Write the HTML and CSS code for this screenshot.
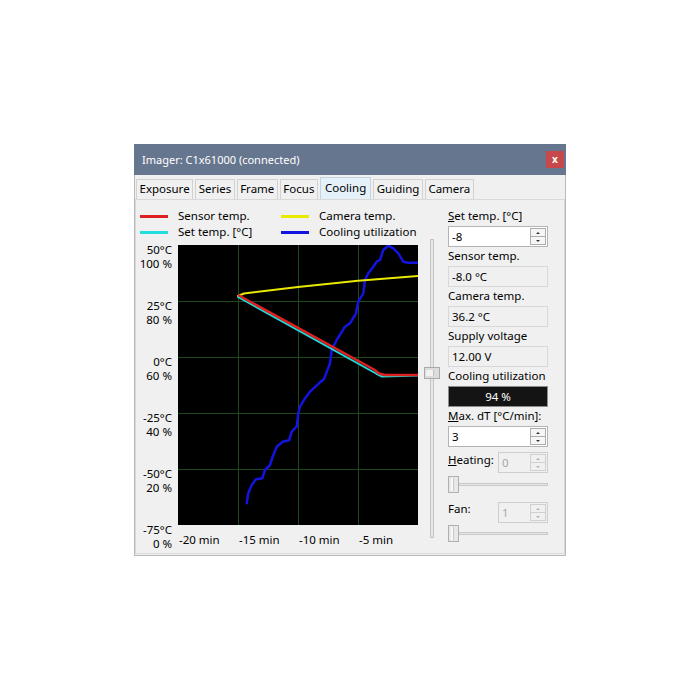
FILE: index.html
```html
<!DOCTYPE html>
<html>
<head>
<meta charset="utf-8">
<link rel="stylesheet" href="styles.css">
</head>
<body>
<div class="window">
  <div class="titlebar">
    <span class="title">Imager: C1x61000 (connected)</span>
    <span class="close">x</span>
  </div>
  <div class="client">
    <div class="tabs">
      <div class="tab">Exposure</div>
      <div class="tab">Series</div>
      <div class="tab">Frame</div>
      <div class="tab">Focus</div>
      <div class="tab active">Cooling</div>
      <div class="tab">Guiding</div>
      <div class="tab">Camera</div>
    </div>
    <div class="panel">
      <div class="chart-section">
        <div class="legend">
          <div class="legend-item"><span class="swatch red"></span>Sensor temp.</div>
          <div class="legend-item"><span class="swatch yellow"></span>Camera temp.</div>
          <div class="legend-item"><span class="swatch cyan"></span>Set temp. [°C]</div>
          <div class="legend-item"><span class="swatch blue"></span>Cooling utilization</div>
        </div>
        <div class="chart-row">
          <div class="y-axis">
            <div class="y-label">50°C<br>100 %</div>
            <div class="y-label">25°C<br>80 %</div>
            <div class="y-label">0°C<br>60 %</div>
            <div class="y-label">-25°C<br>40 %</div>
            <div class="y-label">-50°C<br>20 %</div>
            <div class="y-label">-75°C<br>0 %</div>
          </div>
          <div class="plot-col">
            <svg class="plot" width="240" height="280" viewBox="0 0 240 280">
              <rect width="240" height="280" fill="#000"/>
              <g stroke="#1c481c" stroke-width="1">
                <line x1="60.5" y1="0" x2="60.5" y2="280"/>
                <line x1="120.5" y1="0" x2="120.5" y2="280"/>
                <line x1="180.5" y1="0" x2="180.5" y2="280"/>
                <line x1="0" y1="56.5" x2="240" y2="56.5"/>
                <line x1="0" y1="112.5" x2="240" y2="112.5"/>
                <line x1="0" y1="168.5" x2="240" y2="168.5"/>
                <line x1="0" y1="224.5" x2="240" y2="224.5"/>
              </g>
              <g fill="none" stroke-linejoin="round" stroke-linecap="round">
                <polyline stroke="#1414e0" stroke-width="2.5" points="68.7,258.3 70.3,248.3 73.7,240 78,234.3 84.3,233.3 87,225 92,220 94.7,211.7 98.7,201.7 104.7,196.7 111,195.3 113.7,186.7 118.7,181.7 120.3,168.3 122,161.7 127,153.3 132,146.7 141,138.3 146,134 152,118.3 153.7,105 158.7,95 167,81.7 172,78.3 178,68.3 180.3,56.7 185.3,48.3 187,35 190.3,28.3 195.3,21.7 198.7,16.7 202,15 205.3,5 210.3,0.7 215.3,3.3 220.3,8.3 225.3,16.7 230.3,17.7 240,17.7"/>
                <polyline stroke="#e8e800" stroke-width="2" points="60,51 66,48.5 120,42 180,35.7 240,31"/>
                <polyline stroke="#22d8d8" stroke-width="2" points="60,52 198,128.5 204,131.5 240,130.5"/>
                <polyline stroke="#dd2020" stroke-width="2.5" points="61,50.5 196,124.5 201,128.5 207,130 240,130"/>
              </g>
            </svg>
            <div class="x-axis">
              <span>-20 min</span><span>-15 min</span><span>-10 min</span><span>-5 min</span>
            </div>
          </div>
        </div>
      </div>
      <div class="vslider">
        <div class="vtrack"><div class="vthumb"><span class="vgrip"></span></div></div>
      </div>
      <div class="controls">
        <div class="field">
          <div class="label"><u>S</u>et temp. [°C]</div>
          <div class="box edit"><span class="val">-8</span><span class="spin"><span class="up"></span><span class="down"></span></span></div>
        </div>
        <div class="field">
          <div class="label">Sensor temp.</div>
          <div class="box readonly"><span class="val">-8.0 °C</span></div>
        </div>
        <div class="field">
          <div class="label">Camera temp.</div>
          <div class="box readonly"><span class="val">36.2 °C</span></div>
        </div>
        <div class="field">
          <div class="label">Supply voltage</div>
          <div class="box readonly"><span class="val">12.00 V</span></div>
        </div>
        <div class="field">
          <div class="label">Cooling utilization</div>
          <div class="box meter">94 %</div>
        </div>
        <div class="field">
          <div class="label"><u>M</u>ax. dT [°C/min]:</div>
          <div class="box edit"><span class="val">3</span><span class="spin"><span class="up"></span><span class="down"></span></span></div>
        </div>
        <div class="inline-row heating">
          <div class="inline-label"><u>H</u>eating:</div>
          <div class="box small disabled"><span class="val">0</span><span class="spin"><span class="up"></span><span class="down"></span></span></div>
        </div>
        <div class="hslider first"><div class="htrack"></div><div class="hthumb"><span class="hgrip"></span></div></div>
        <div class="inline-row fan">
          <div class="inline-label">Fan:</div>
          <div class="box small disabled"><span class="val">1</span><span class="spin"><span class="up"></span><span class="down"></span></span></div>
        </div>
        <div class="hslider"><div class="htrack"></div><div class="hthumb"><span class="hgrip"></span></div></div>
      </div>
    </div>
  </div>
</div>
</body>
</html>
```
FILE: styles.css
```css
* { box-sizing: border-box; }
body {
  margin: 0;
  background: #fff;
  font-family: "Noto Sans", "Open Sans", sans-serif;
  font-size: 11.5px;
  color: #000;
}
.window {
  margin: 144px 0 0 134px;
  width: 432px;
}
.titlebar {
  height: 31px;
  background: #67768f;
  display: flex;
  align-items: center;
  justify-content: space-between;
  padding-left: 8px;
  padding-right: 2px;
}
.title {
  color: #fff;
  font-size: 11px;
}
.close {
  width: 18px;
  height: 17px;
  background: #c7474a;
  color: #fff;
  font-size: 10px;
  font-weight: bold;
  display: flex;
  align-items: center;
  justify-content: center;
  line-height: 1;
  padding-bottom: 1px;
}
.client {
  background: #f0f0f0;
  border: 1px solid #b8b8b8;
  border-top: none;
  padding: 2px 0 1px 0;
}
.tabs {
  display: flex;
  align-items: flex-end;
  height: 22px;
  gap: 2px;
  padding-left: 1px;
}
.tab {
  height: 20px;
  padding: 0 2.5px;
  border: 1px solid #d2d2d2;
  border-bottom: none;
  background: #f0f0f0;
  line-height: 18px;
}
.tab.active {
  height: 22px;
  background: #e4f1f9;
  border-color: #c4d4de;
  line-height: 19px;
  padding: 0 4px;
}
.panel {
  display: flex;
  height: 355px;
  border: 1px solid #d9d9d9;
  background: #f0f0f0;
}
.chart-section {
  width: 284px;
  padding: 8px 0 0 3px;
}
.legend {
  display: grid;
  grid-template-columns: 141px auto;
  grid-auto-rows: 16px;
  margin-left: 1px;
}
.legend-item {
  display: flex;
  align-items: center;
  line-height: 16px;
  white-space: nowrap;
}
.swatch {
  width: 28px;
  height: 3px;
  margin-right: 10px;
  flex: none;
}
.swatch.red { background: #e02020; }
.swatch.yellow { background: #eaea00; }
.swatch.cyan { background: #22dede; }
.swatch.blue { background: #1414e0; }
.chart-row {
  display: flex;
  gap: 6px;
  margin-top: 3px;
}
.y-axis {
  width: 33px;
  display: grid;
  grid-auto-rows: 56px;
  text-align: right;
  line-height: 14px;
  white-space: nowrap;
}
.plot-col {
  margin-top: 2px;
}
.plot {
  display: block;
}
.x-axis {
  display: flex;
  margin-top: 7px;
  line-height: 16px;
}
.x-axis span {
  width: 60px;
  padding-left: 1px;
}
.vslider {
  width: 24px;
  padding-top: 39px;
}
.vtrack {
  position: relative;
  margin: 0 auto;
  width: 4px;
  height: 299px;
  background: #e6e6e6;
  border: 1px solid #c6c6c6;
}
.vthumb {
  position: absolute;
  left: -7px;
  top: 127px;
  width: 16px;
  height: 12px;
  background: #dcdcdc;
  border: 1px solid #a9a9a9;
}
.vgrip {
  position: absolute;
  left: 1px;
  top: 2px;
  width: 8px;
  height: 6px;
  background: #f2f2f2;
  border-right: 1px solid #c0c0c0;
}
.controls {
  width: 100px;
  margin-left: 4px;
  padding-top: 8px;
}
.field .label {
  line-height: 16px;
  height: 18px;
  white-space: nowrap;
}
.box {
  height: 21px;
  margin-bottom: 1px;
  display: flex;
  align-items: center;
  line-height: 19px;
}
.val {
  flex: 1;
  padding-left: 3px;
}
.box.edit {
  background: #fff;
  border: 1px solid #b4b4b4;
}
.box.readonly {
  background: #f0f0f0;
  border: 1px solid #d8d8d8;
}
.box.meter {
  background: #141414;
  border: 1px solid #8c8c8c;
  color: #fff;
  justify-content: center;
}
.spin {
  width: 16px;
  height: 17px;
  margin-right: 1px;
  display: flex;
  flex-direction: column;
}
.spin .up, .spin .down {
  flex: 1;
  border: 1px solid #adadad;
  background: #f6f6f6;
  display: flex;
  align-items: center;
  justify-content: center;
}
.spin .down { border-top: none; }
.spin .up::after {
  content: "";
  border-left: 2px solid transparent;
  border-right: 2px solid transparent;
  border-bottom: 2px solid #333;
}
.spin .down::after {
  content: "";
  border-left: 2px solid transparent;
  border-right: 2px solid transparent;
  border-top: 2px solid #333;
}
.box.small {
  width: 50px;
}
.box.disabled {
  background: #f0f0f0;
  border: 1px solid #cfcfcf;
  color: #a8a8a8;
}
.box.disabled .spin .up, .box.disabled .spin .down {
  border-color: #d0d0d0;
  background: #f0f0f0;
}
.box.disabled .spin .up::after { border-bottom-color: #b0b0b0; }
.box.disabled .spin .down::after { border-top-color: #b0b0b0; }
.inline-row {
  display: flex;
  justify-content: space-between;
  align-items: flex-start;
}
.inline-row .box { margin-bottom: 0; }
.inline-label {
  line-height: 14px;
  padding-top: 1px;
}
.heating { margin-top: 5px; }
.fan { margin-top: 9px; }
.fan .inline-label { padding-top: 0; }
.hslider {
  position: relative;
  height: 17px;
  margin-top: 2px;
}
.hslider.first { margin-top: 3px; }
.htrack {
  position: absolute;
  left: 0;
  right: 0;
  top: 7px;
  height: 3px;
  background: #e6e6e6;
  border: 1px solid #c9c9c9;
}
.hthumb {
  position: absolute;
  left: 0;
  top: 0;
  width: 11px;
  height: 17px;
  background: #e8e8e8;
  border: 1px solid #b0b0b0;
}
.hgrip {
  position: absolute;
  left: 2px;
  top: 1px;
  width: 3px;
  height: 13px;
  background: #f8f8f8;
  border-right: 1px solid #c8c8c8;
}
```
